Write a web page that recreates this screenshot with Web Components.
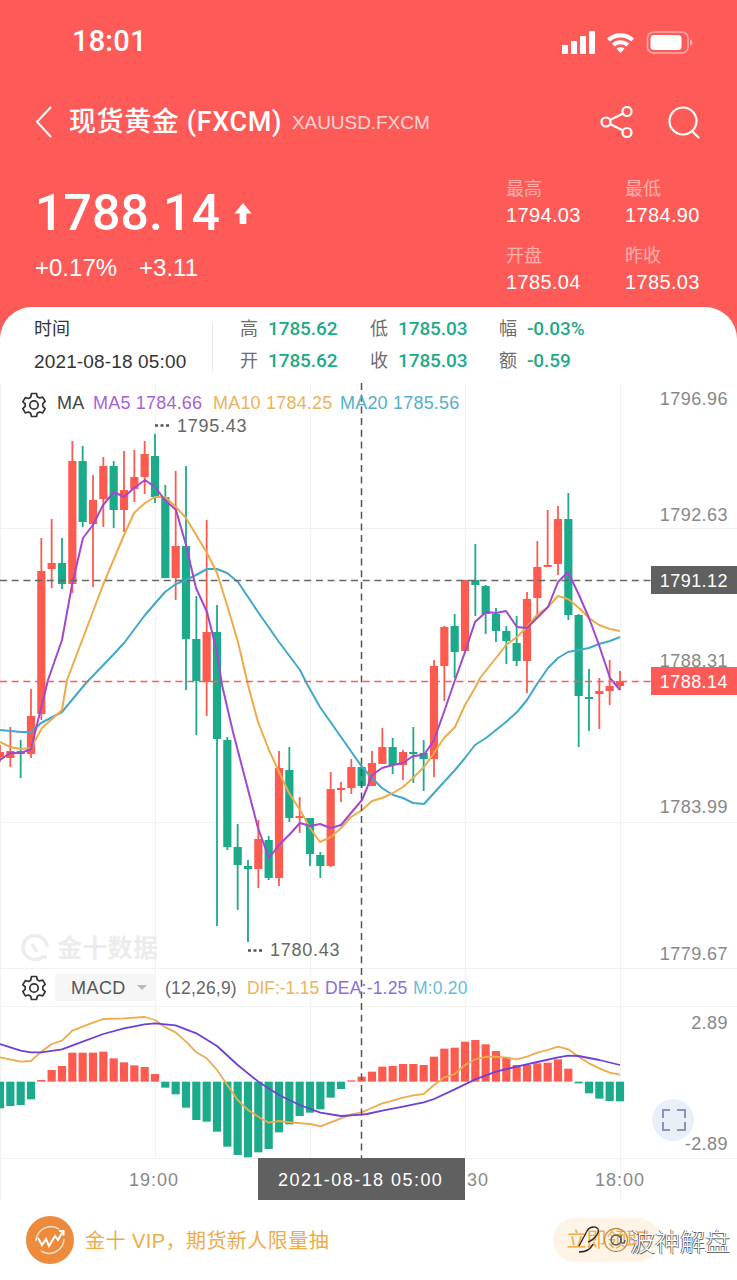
<!DOCTYPE html>
<html lang="zh"><head><meta charset="utf-8"><title>现货黄金</title>
<style>
html,body{margin:0;padding:0;background:#fff}
body{width:737px;height:1280px;overflow:hidden;font-family:"Liberation Sans","Noto Sans CJK SC",sans-serif}
</style></head><body>
<quote-header></quote-header>
<kline-chart></kline-chart>
<promo-bar></promo-bar>
<script>
const CJK='"Liberation Sans","Noto Sans CJK SC",sans-serif';
const MED='Roboto,"Noto Sans CJK SC",sans-serif';
class StatusBar extends HTMLElement{constructor(){super();this.attachShadow({mode:'open'}).innerHTML=`<style>
:host{display:flex;align-items:center;justify-content:space-between;height:82px;padding:2px 44px 0 72px;box-sizing:border-box;color:#fff}
.t{font:500 29px/1 ${MED};letter-spacing:.2px;position:relative;top:-1px}
svg{display:block}
</style><span class="t">18:01</span>
<svg width="131" height="23" viewBox="0 0 131 23" fill="#fff">
<rect x="0" y="14" width="6" height="9" rx="1"/><rect x="9" y="10" width="6" height="13" rx="1"/><rect x="18" y="5" width="6" height="18" rx="1"/><rect x="27" y="0" width="6" height="23" rx="1"/>
<path d="M45 7.500a20 20 0 0 1 27 0l-2.800 3a16 16 0 0 0-21.400 0zM49.800 12.500a13 13 0 0 1 17.400 0l-2.800 3a9 9 0 0 0-11.800 0zM54.500 17.500a6 6 0 0 1 8 0l-4 4.500z"/>
<rect x="85.500" y="1" width="40.500" height="21" rx="6" fill="none" stroke="#fff" stroke-opacity=".5" stroke-width="1.500"/>
<rect x="88.500" y="4" width="31" height="15" rx="3.500"/>
<path d="M128 8.500c2 .5 2.500 1.500 2.500 3s-.5 2.500-2.500 3z" fill-opacity=".5"/>
</svg>`}}
customElements.define('status-bar',StatusBar);

class NavBar extends HTMLElement{constructor(){super();this.attachShadow({mode:'open'}).innerHTML=`<style>
:host{display:flex;align-items:center;height:78px;padding:2px 36px 0 35px;box-sizing:border-box;color:#fff}
.back{margin-right:17px;display:block}
.n{font:500 27px/1 ${MED};white-space:nowrap;letter-spacing:.6px}
.c{font:400 19px/1 ${CJK};opacity:.72;margin-left:10px;letter-spacing:-.05px;white-space:nowrap;padding-top:1px}
.r{margin-left:auto;display:flex;gap:35px;align-items:center}
svg{display:block}
</style>
<svg class="back" width="17" height="32" viewBox="0 0 17 32" fill="none" stroke="#fff" stroke-width="2"><path d="M16 1 2 15.800 16 31"/></svg>
<span class="n">现货黄金 (FXCM)</span><span class="c">XAUUSD.FXCM</span>
<div class="r">
<svg width="33" height="32" viewBox="0 0 33 32" fill="none" stroke="#fff" stroke-width="2.200"><circle cx="6" cy="16" r="4.500"/><circle cx="27" cy="5.500" r="4.500"/><circle cx="27" cy="26.500" r="4.500"/><path d="M10 14 23 7.500M10 18l13 6.500"/></svg>
<svg width="33" height="33" viewBox="0 0 33 33" fill="none" stroke="#fff" stroke-width="2.200"><circle cx="15" cy="15" r="13.500"/><path d="M24 25l7 7"/></svg>
</div>`}}
customElements.define('nav-bar',NavBar);

class QuoteStat extends HTMLElement{constructor(){super();this.attachShadow({mode:'open'}).innerHTML=`<style>
:host{display:block;color:#fff}
.l{font:400 18px/24px ${CJK};opacity:.5}
.v{font:400 20px/24px ${CJK};margin-top:2px;letter-spacing:.35px}
</style><div class="l">${this.getAttribute('label')}</div><div class="v">${this.getAttribute('value')}</div>`}}
customElements.define('quote-stat',QuoteStat);

class PriceBlock extends HTMLElement{constructor(){super();this.attachShadow({mode:'open'}).innerHTML=`<style>
:host{display:flex;justify-content:space-between;padding:17px 37px 0 35px;box-sizing:border-box;height:147px;color:#fff}
.p{display:flex;align-items:center;gap:14px;font:500 50px/60px ${MED};letter-spacing:.1px;margin-top:6px}
.ch{display:flex;gap:22px;font:400 24px/28px ${CJK};margin-top:11px}
.g{display:grid;grid-template-columns:119px 75px;row-gap:17px;align-content:start}
svg{display:block}
</style><div><div class="p"><span>1788.14</span><svg width="18" height="21" viewBox="0 0 18 22" fill="#fff"><path d="M9 0l9 11h-5.500v11h-7V11H0z"/></svg></div>
<div class="ch"><span>+0.17%</span><span>+3.11</span></div></div>
<div class="g"><quote-stat label="最高" value="1794.03"></quote-stat><quote-stat label="最低" value="1784.90"></quote-stat><quote-stat label="开盘" value="1785.04"></quote-stat><quote-stat label="昨收" value="1785.03"></quote-stat></div>`}}
customElements.define('price-block',PriceBlock);

class TickPanel extends HTMLElement{constructor(){super();
const cell=(l,v)=>`<span class="c"><i>${l}</i><b>${v}</b></span>`;
this.attachShadow({mode:'open'}).innerHTML=`<style>
:host{display:flex;height:76px;background:#fff;border-radius:32px 32px 0 0;box-sizing:border-box;padding:8px 0 0 34px;color:#333}
.time{width:179px;border-right:1px solid #e8e8e8;height:48px;margin-top:8px;font:400 18px/33px ${CJK};box-sizing:border-box}
.time div:first-child{margin-top:-10px;height:32px}
.time div:last-child{font-size:19px;letter-spacing:.15px}
.grid{display:grid;grid-template-columns:130px 129px auto;margin:-2px 0 0 27px;grid-auto-rows:32px;align-content:start}
.c{display:flex;align-items:center;font:500 19px/32px ${MED}}
i{font-style:normal;font-weight:400;color:#6d6d6d;width:28px;font-size:18px}
b{font-weight:500;color:#1bab8a;letter-spacing:-.1px}
</style><div class="time"><div>时间</div><div>2021-08-18 05:00</div></div>
<div class="grid">${cell('高','1785.62')}${cell('低','1785.03')}${cell('幅','-0.03%')}${cell('开','1785.62')}${cell('收','1785.03')}${cell('额','-0.59')}</div>`}}
customElements.define('tick-panel',TickPanel);

class QuoteHeader extends HTMLElement{constructor(){super();this.attachShadow({mode:'open'}).innerHTML=`<style>
:host{display:block;background:#fe5b58;height:383px;box-sizing:border-box}
</style><status-bar></status-bar><nav-bar></nav-bar><price-block></price-block><tick-panel></tick-panel>`}}
customElements.define('quote-header',QuoteHeader);

/* [color 0=red 1=green, wickTop, bodyTop, bodyBottom, wickBottom] by candle index */
const C=[[0,745,752,757,762],[0,727,751,758,767],[1,740,751,754,778],[0,689,716,754,758],[0,538,571,714,720],[0,519,563,569,588],[1,538,563,584,589],[0,441,461,584,593],[1,446,461,522,527],[0,475,500,524,587],[0,457,466,499,527],[1,461,466,510,528],[0,451,490,510,532],[0,450,477,489,502],[0,441,454,477,494],[1,434,456,497,503],[1,485,497,578,578],[0,471,546,578,600],[1,466,546,639,690],[1,596,639,681,735],[0,520,632,682,716],[1,605,632,739,926],[1,737,740,847,850],[1,824,847,865,910],[1,860,866,869,942],[0,820,839,869,888],[1,836,840,878,880],[0,751,768,878,886],[1,747,770,818,822],[0,797,816,818,833],[1,818,818,854,866],[1,852,855,866,878],[0,772,789,866,867],[0,782,788,789,802],[0,759,767,788,794],[1,765,767,786,788],[0,751,763,786,786],[0,728,747,764,764],[1,738,747,765,774],[0,750,752,765,780],[1,727,752,754,783],[1,740,753,759,791],[0,660,666,759,777],[0,626,627,666,701],[1,614,626,652,678],[0,580,580,651,652],[1,544,580,585,616],[1,585,586,614,634],[1,608,614,631,642],[1,626,631,641,664],[1,616,643,661,666],[0,592,599,661,693],[0,541,567,598,616],[0,510,565,566,565],[0,506,519,564,575],[1,493,519,615,620],[1,614,615,696,747],[1,669,697,699,731],[0,678,691,694,729],[0,660,686,691,705],[0,671,681,686,690]];
const MA5=[[0,760],[10,753],[21,753],[31,749],[48,680],[62,640],[72,585],[83,538],[93,525],[103,505],[114,492],[124,497],[134,488],[145,480],[155,487],[165,500],[176,510],[186,545],[196,588],[207,612],[217,652],[222,685],[233,732],[258,828],[269,858],[279,845],[289,835],[300,823],[310,826],[320,824],[331,828],[341,825],[351,813],[362,800],[367,788],[372,775],[382,768],[393,765],[403,763],[413,756],[424,755],[434,740],[444,712],[455,680],[465,652],[475,622],[486,612],[496,613],[506,611],[517,627],[527,628],[537,618],[548,607],[558,582],[568,572],[579,595],[589,618],[599,645],[610,678],[620,690]];
const MA10=[[0,742],[10,747],[21,749],[31,748],[42,728],[62,710],[67,680],[83,638],[103,585],[124,535],[134,513],[145,503],[155,497],[165,497],[176,507],[186,518],[207,553],[217,573],[227,605],[238,642],[248,685],[258,722],[269,750],[279,772],[289,793],[300,810],[310,828],[320,842],[331,837],[341,828],[351,817],[362,810],[372,801],[382,798],[393,793],[403,787],[413,778],[424,767],[434,753],[444,738],[455,727],[465,705],[475,688],[480,678],[496,658],[506,645],[517,637],[527,627],[537,615],[548,607],[558,596],[568,599],[579,608],[589,618],[599,625],[610,629],[620,631]];
const MA20=[[0,730],[21,732],[31,732],[41,723],[62,712],[86,683],[113,655],[124,643],[145,615],[165,592],[176,584],[186,580],[196,575],[207,569],[217,569],[227,573],[238,582],[258,612],[279,642],[300,670],[307,684],[320,707],[341,737],[362,767],[372,778],[382,788],[393,795],[403,798],[413,803],[424,804],[434,793],[444,782],[455,770],[465,758],[475,745],[486,738],[496,730],[506,722],[517,712],[527,700],[537,684],[548,668],[558,658],[568,652],[579,650],[589,648],[599,644],[610,641],[620,637]];
const H=[415,408,405,388,330,300,288,248,248,248,245,265,277,286,291,312,353,373,413,450,455,485,530,555,562,547,537,487,463,438,428,418,383,357,331,320,305,290,288,282,282,285,260,236,233,215,210,223,243,263,285,285,280,278,268,296,340,370,386,393,394];
const z=y=>970+y/3;
const DIF=[[0,262],[62,275],[93,273],[124,245],[155,222],[186,212],[217,182],[248,170],[279,158],[310,147],[372,145],[434,141],[465,150],[496,172],[527,187],[558,215],[589,247],[620,265],[651,300],[682,345],[713,390],[744,420],[775,440],[806,458],[837,453],[880,458],[930,462],[961,469],[992,457],[1023,445],[1054,433],[1085,427],[1101,420],[1147,400],[1178,392],[1209,383],[1240,376],[1271,372],[1302,345],[1333,322],[1364,312],[1395,285],[1426,268],[1457,261],[1488,260],[1519,263],[1550,268],[1581,260],[1612,248],[1643,240],[1674,230],[1705,238],[1736,260],[1767,280],[1798,295],[1829,308],[1860,314]].map(([x,y])=>[x/3,z(y)]);
const DEA=[[0,222],[62,242],[93,247],[124,247],[186,238],[248,215],[310,192],[372,175],[434,163],[465,160],[527,166],[589,190],[651,228],[713,285],[775,335],[837,375],[899,405],[961,428],[1023,438],[1085,434],[1101,432],[1147,422],[1209,410],[1271,397],[1302,387],[1364,358],[1426,328],[1488,305],[1550,290],[1612,276],[1674,262],[1705,257],[1736,258],[1798,270],[1860,285]].map(([x,y])=>[x/3,z(y)]);
const pts=a=>a.map(p=>p.join(',')).join(' ');
const RED='#fe5b50',GRN='#1bab8a',S=10.3333;
const candles=C.map(([g,wt,bt,bb,wb],i)=>{const x=S*i,col=g?GRN:RED,h=Math.max(bb-bt,2);
 return `<rect x="${x-.9}" y="${wt}" width="1.800" height="${wb-wt}" fill="${col}"/><rect x="${x-4.100}" y="${bt}" width="8.200" height="${h}" fill="${col}"/>`}).join('');
const hist=H.map((t,i)=>{const x=S*i-4.100,y=z(t),b=z(335);return t>335?`<rect x="${x}" y="${b}" width="8.200" height="${y-b}" fill="${GRN}"/>`:`<rect x="${x}" y="${y}" width="8.200" height="${b-y}" fill="${RED}"/>`}).join('');
const gear=(x,y)=>`<g transform="translate(${x} ${y})" fill="none" stroke="#333" stroke-width="1.700" stroke-linejoin="round"><path d="M9.500 1.500h5l.8 3.200 2.200 1.300 3.200-.9 2.500 4.300-2.400 2.300v2.600l2.400 2.300-2.500 4.300-3.200-.9-2.200 1.300-.8 3.200h-5l-.8-3.200-2.200-1.300-3.200.9-2.500-4.300 2.400-2.300v-2.600L.8 9.900l2.500-4.300 3.200.9 2.200-1.300z"/><circle cx="12" cy="13" r="4.200"/></g>`;
const dots=(x,y)=>`<path d="M${x} ${y}h3M${x+5.500} ${y}h3M${x+11} ${y}h3" stroke="#555" stroke-width="2.500" fill="none"/>`;

class KlineChart extends HTMLElement{constructor(){super();this.attachShadow({mode:'open'}).innerHTML=`<style>
:host{display:block;height:817px;position:relative;margin:0}
svg{display:block;position:absolute;left:0;top:0;font-family:${CJK}}
text{font-size:18px;letter-spacing:.45px}
.lbl{fill:#888;text-anchor:end}
.s{font-size:18px;letter-spacing:.2px}
.m{font-size:17.500px;letter-spacing:.2px}
.ext{letter-spacing:.75px}
.ax{letter-spacing:1px}
</style>
<svg width="737" height="817" viewBox="0 383 737 817">
<g stroke="#f2f2f2" stroke-width="1" fill="none">
<path d="M0 382.500H737M0 528.500H737M0 822.500H737M0 968.500H737M0 1006.500H737M0 1158.500H737M0 1200.500H737"/>
<path d="M155.500 383V1158M310.500 383V1158M465.500 383V1158M620.500 383V1200M.5 383V1200"/>
</g>
<g fill="none" stroke="#ededed" stroke-width="3.500"><path d="M43.500 956A12 12 0 1 1 47 947"/><path d="M32 944l5 8"/></g>
<circle cx="45" cy="957" r="2" fill="#ededed"/>
<text x="57" y="957" style="font-size:25px;letter-spacing:.3px;font-weight:700" fill="#ececec">金十数据</text>
${candles}
<polyline points="${pts(MA20)}" fill="none" stroke="#3fa9c9" stroke-width="2" stroke-linejoin="round"/>
<polyline points="${pts(MA10)}" fill="none" stroke="#eeab4a" stroke-width="2" stroke-linejoin="round"/>
<polyline points="${pts(MA5)}" fill="none" stroke="#a148cf" stroke-width="2" stroke-linejoin="round"/>
${hist}
<polyline points="${pts(DIF)}" fill="none" stroke="#eeab4a" stroke-width="1.800" stroke-linejoin="round"/>
<polyline points="${pts(DEA)}" fill="none" stroke="#6f3fd6" stroke-width="1.800" stroke-linejoin="round"/>
<path d="M0 580.500H652" stroke="#666" stroke-width="1.500" stroke-dasharray="7 4.700" fill="none"/>
<path d="M0 681.500H652" stroke="#fe5b58" stroke-width="1.300" stroke-dasharray="7 4.700" fill="none"/>
<path d="M361.500 383V1158" stroke="#555" stroke-width="1.500" stroke-dasharray="7 4.700" fill="none"/>
${dots(155,425.5)}${dots(248,950.5)}
<text class="ext" x="177" y="432" fill="#666">1795.43</text>
<text class="ext" x="270" y="956" fill="#666">1780.43</text>
${gear(22,392)}
<text class="s" x="57" y="409" fill="#444">MA</text>
<text class="s" x="93" y="409" fill="#a95fd5">MA5 1784.66</text>
<text class="s" x="213" y="409" fill="#eeb25c">MA10 1784.25</text>
<text class="s" x="340" y="409" fill="#55aecb">MA20 1785.56</text>
<text class="lbl" x="728" y="405">1796.96</text>
<text class="lbl" x="728" y="521">1792.63</text>
<text class="lbl" x="728" y="667">1788.31</text>
<text class="lbl" x="728" y="813">1783.99</text>
<text class="lbl" x="728" y="960">1779.67</text>
<rect x="651" y="566" width="86" height="28" fill="#606060"/>
<text class="lbl" x="728" y="587" style="fill:#fff">1791.12</text>
<rect x="651" y="667" width="86" height="28" fill="#fe5b58"/>
<text class="lbl" x="728" y="688" style="fill:#fff">1788.14</text>
${gear(22,975)}
<rect x="55" y="974" width="100" height="27" fill="#f6f6f6"/>
<text x="71" y="994" fill="#555" style="font-size:18px">MACD</text>
<path d="M137 985h10l-5 5z" fill="#bbb"/>
<text class="m" x="165" y="994" fill="#666">(12,26,9)</text>
<text class="m" x="247" y="994" fill="#eeb25c" style="letter-spacing:-.1px">DIF:-1.15</text>
<text class="m" x="325" y="994" fill="#8a6fd8">DEA:-1.25</text>
<text class="m" x="413" y="994" fill="#66bcd8">M:0.20</text>
<text class="lbl" x="728" y="1029">2.89</text>
<text class="lbl" x="728" y="1150">-2.89</text>
<circle cx="673" cy="1120" r="21" fill="#e9eff9"/>
<path d="M663 1118v-8h7M677 1110h8v8M663 1122v8h7M685 1122v8h-8" fill="none" stroke="#8d93b5" stroke-width="2"/>
<text class="ax" x="129" y="1186" fill="#888">19:00</text>
<text class="ax" x="595" y="1186" fill="#888">18:00</text>
<text class="ax" x="467" y="1186" fill="#888">30</text>
<rect x="258" y="1158" width="207" height="42" fill="#606060"/>
<text x="278" y="1186" fill="#fff" style="letter-spacing:1.450px">2021-08-18 05:00</text>
</svg>`}}
customElements.define('kline-chart',KlineChart);

class PromoBar extends HTMLElement{constructor(){super();this.attachShadow({mode:'open'}).innerHTML=`<style>
:host{display:flex;align-items:center;height:80px;padding:0 0 0 26px;box-sizing:border-box;position:relative;background:#fff}
.t{font:400 20px/1 ${CJK};color:#eeab4a;margin:2px 0 0 11px;letter-spacing:.45px;white-space:nowrap}
.btn{position:absolute;left:553px;top:18px;width:107px;height:44px;border-radius:22px;background:#fdf3e6;color:#eeab4a;font:400 20px/44px ${CJK};text-align:center;white-space:nowrap}
.wm{position:absolute;left:578px;top:25px;display:flex;align-items:center;color:#fff;white-space:nowrap;font:300 25px/30px "Noto Sans CJK SC",sans-serif;text-shadow:-.7px 0 0 #444,.7px .7px 0 #666}
.wm svg + svg{margin-left:1px}
.wm span{margin-left:1px}
svg{display:block;flex:none}
</style>
<svg width="48" height="48" viewBox="0 0 48 48"><circle cx="24" cy="24" r="24" fill="#ee8a3c"/><path d="M10 25a15 15 0 0 1 23-12M38 23a15 15 0 0 1-23 12" fill="none" stroke="#fff" stroke-opacity=".75" stroke-width="1.500"/><path d="M12 22l4 7 4-6 3 7 6-10 3 4 5-9m-4 0h4.500v4.500" fill="none" stroke="#fff" stroke-width="2"/></svg>
<span class="t">金十 VIP，期货新人限量抽</span>
<span class="btn">立即领取</span>
<span class="wm"><svg width="24" height="30" viewBox="0 0 24 30" fill="none" stroke="#222" stroke-width="1.300"><path d="M1 21 9 6c3-5 9-5 11-2 2 5-6 12-10 13M1 27c7 0 12-3 14-8"/></svg><svg width="26" height="26" viewBox="0 0 26 26" fill="none" stroke="#c98a3a" stroke-width="1.300"><circle cx="13" cy="13" r="11.500"/><circle cx="13" cy="13" r="5" stroke="#555"/><path d="M18 8v6c0 3 4 3 4-1" stroke="#555"/></svg><span>波神解盘</span></span>`}}
customElements.define('promo-bar',PromoBar);
</script>
</body></html>
